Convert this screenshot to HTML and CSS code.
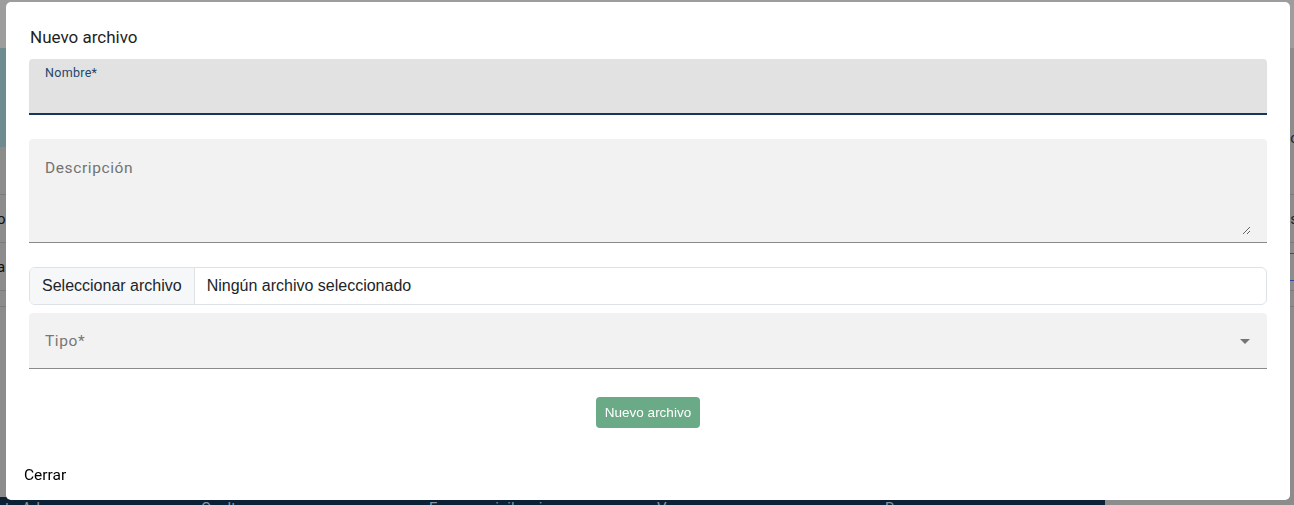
FILE: index.html
```html
<!DOCTYPE html>
<html lang="es">
<head>
  <meta charset="UTF-8">
  <meta name="viewport" content="width=device-width, initial-scale=1.0">
  <title>Nuevo archivo</title>
  <link rel="stylesheet" href="styles.css">
</head>
<body>

  <!-- Page behind the dialog (dimmed) -->
  <div class="page">
    <div class="page-top"></div>
    <div class="page-banner">
      <div class="banner-side"></div>
      <div class="banner-main"><span class="edge-text">c</span></div>
    </div>
    <div class="page-row"><span class="edge-text"></span></div>
    <div class="page-row"><span class="row-left">o</span><span class="edge-text">s</span></div>
    <div class="page-row"><span class="row-left">a</span><span class="edge-link"></span></div>
    <div class="page-row short"></div>
    <div class="page-rest"></div>
    <div class="page-footer">
      <div class="footer-cols">
        <span>Evento Adverso</span>
        <span>Oculto</span>
        <span>Farmacovigilancia</span>
        <span>Ver</span>
        <span>Resumen</span>
      </div>
    </div>
  </div>

  <!-- Dialog -->
  <div class="dialog">
    <div class="dialog-body">
      <h2 class="dialog-title">Nuevo archivo</h2>

      <!-- Nombre -->
      <div class="field field-focused">
        <span class="field-label-float">Nombre*</span>
      </div>

      <!-- Descripcion -->
      <div class="field field-area">
        <textarea class="field-textarea" placeholder="Descripción"></textarea>
      </div>

      <!-- Archivo -->
      <div class="file-input">
        <span class="file-btn">Seleccionar archivo</span>
        <span class="file-name">Ningún archivo seleccionado</span>
      </div>

      <!-- Tipo -->
      <div class="field field-select">
        <span class="field-label">Tipo*</span>
        <span class="select-arrow"></span>
      </div>

      <div class="actions">
        <button class="btn-submit">Nuevo archivo</button>
      </div>
    </div>

    <div class="dialog-footer">
      <button class="btn-close">Cerrar</button>
    </div>
  </div>

</body>
</html>
```

FILE: styles.css
```css
/* Global */
body {
  margin: 0;
  padding: 0;
  background-color: #8c8c8c;
  font-family: Roboto, "Liberation Sans", sans-serif;
  overflow: hidden;
}

/* Dimmed page behind */
.page {
  height: 505px;
  display: flex;
  flex-direction: column;
}

.page-top {
  height: 48px;
  background-color: #9d9d9d;
}

.page-banner {
  height: 99px;
  display: flex;
}

.banner-side {
  width: 220px;
  background-color: #6f8b8f;
}

.banner-main {
  flex: 1;
  display: flex;
  justify-content: flex-end;
  align-items: flex-end;
}

.page-row {
  height: 47px;
  border-bottom: 1px solid #7b7b7b;
  display: flex;
  align-items: center;
  justify-content: space-between;
  font-size: 15px;
  color: #111;
}

.page-row.short {
  height: 15px;
}

.row-left {
  margin-left: -3px;
}

.edge-text {
  font-size: 15px;
  color: #222;
  margin-right: -4px;
}

.edge-link {
  width: 6px;
  height: 26px;
  border-top: 1px solid #2a4f9a;
  border-bottom: 1px solid #2a4f9a;
}

.page-rest {
  flex: 1;
}

.page-footer {
  height: 8px;
  background: linear-gradient(to right, #0b2136 1105px, #8c8c8c 1105px);
  overflow: hidden;
}

.footer-cols {
  display: flex;
  margin-left: -27px;
  padding-top: 2px;
}

.footer-cols span {
  width: 228px;
  flex: none;
  font-size: 15px;
  color: #8a939d;
}

/* Dialog */
.dialog {
  position: fixed;
  left: 6px;
  top: 2px;
  width: 1284px;
  height: 498px;
  background-color: #ffffff;
  border-radius: 5px;
  display: flex;
  flex-direction: column;
}

.dialog-body {
  padding: 0 23px;
}

.dialog-title {
  margin: 0;
  padding-top: 25px;
  padding-left: 1px;
  font-size: 17px;
  line-height: 20px;
  font-weight: 400;
  color: #1f1f1f;
}

/* Material-like fill fields */
.field {
  position: relative;
  height: 55px;
  background-color: #f2f2f2;
  border-radius: 4px 4px 0 0;
  border-bottom: 1px solid #8a8a8a;
  padding: 0 16px;
}

.field-focused {
  margin-top: 12px;
  height: 54px;
  background-color: #e2e2e2;
  border-bottom: 2px solid #14375c;
}

.field-label-float {
  display: block;
  padding-top: 7px;
  font-size: 12.5px;
  line-height: 14px;
  letter-spacing: 0.3px;
  color: #24466b;
}

.field-area {
  margin-top: 24px;
  height: 83px;
  padding: 20px 16px 0 16px;
}

.field-textarea {
  display: block;
  box-sizing: border-box;
  width: 100%;
  height: 76px;
  padding: 0;
  border: none;
  outline: none;
  background: transparent;
  font-family: Roboto, sans-serif;
  font-size: 15.5px;
  line-height: 18px;
  letter-spacing: 0.6px;
  color: #222;
}

.field-textarea::placeholder {
  color: #737373;
}

/* File input */
.file-input {
  margin-top: 24px;
  height: 36px;
  border: 1px solid #dee2e6;
  border-radius: 6px;
  display: flex;
  align-items: stretch;
  overflow: hidden;
  font-family: "Liberation Sans", Arial, sans-serif;
  font-size: 16px;
  color: #212529;
}

.file-btn {
  display: flex;
  align-items: center;
  padding: 0 12px;
  background-color: #f6f7f8;
  border-right: 1px solid #dee2e6;
}

.file-name {
  display: flex;
  align-items: center;
  padding-left: 12px;
}

/* Select */
.field-select {
  margin-top: 8px;
  display: flex;
  align-items: center;
  justify-content: space-between;
}

.field-label {
  font-size: 15.5px;
  letter-spacing: 0.6px;
  color: #767676;
  padding-top: 1px;
}

.select-arrow {
  width: 0;
  height: 0;
  border-left: 5px solid transparent;
  border-right: 5px solid transparent;
  border-top: 5px solid #757575;
  margin-right: 1px;
  margin-top: 2px;
}

/* Actions */
.actions {
  display: flex;
  justify-content: center;
  margin-top: 28px;
}

.btn-submit {
  height: 31px;
  padding: 0 9px;
  border: none;
  border-radius: 4px;
  background-color: #6aaa87;
  color: #ffffff;
  font-family: "Liberation Sans", Arial, sans-serif;
  font-size: 13.5px;
  cursor: pointer;
}

/* Footer */
.dialog-footer {
  margin-top: auto;
  padding: 0 0 15px 18px;
}

.btn-close {
  border: none;
  background: none;
  padding: 0;
  font-family: Roboto, sans-serif;
  font-size: 15.5px;
  line-height: 20px;
  color: #000000;
  cursor: pointer;
}
```
